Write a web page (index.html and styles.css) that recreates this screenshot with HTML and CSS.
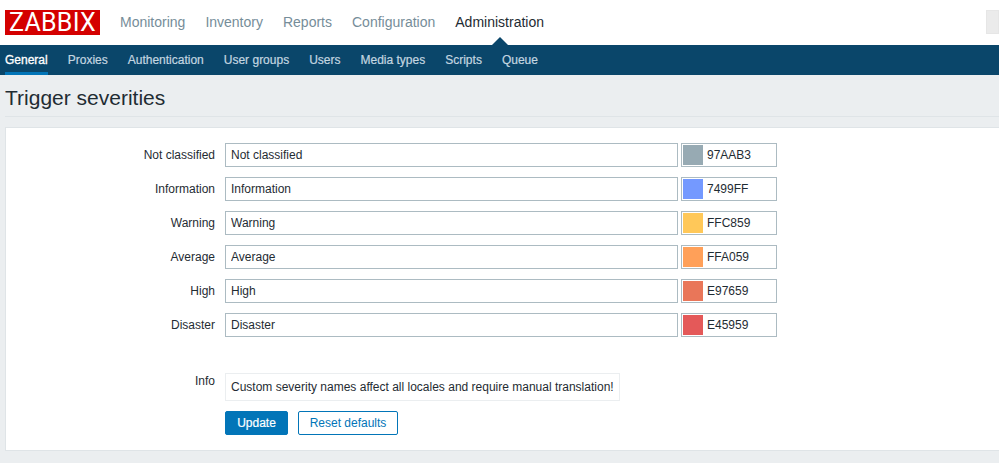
FILE: index.html
```html
<!DOCTYPE html>
<html lang="en">
<head>
    <meta charset="UTF-8">
    <meta name="viewport" content="width=device-width, initial-scale=1.0">
    <title>Trigger severities</title>
    <link rel="stylesheet" href="styles.css">
</head>
<body>
    <header class="topbar">
        <div class="logo">ZABBIX</div>
        <nav class="mainnav">
            <a href="#">Monitoring</a>
            <a href="#">Inventory</a>
            <a href="#">Reports</a>
            <a href="#">Configuration</a>
            <a href="#" class="selected">Administration</a>
        </nav>
        <div class="searchbox"></div>
    </header>

    <nav class="subnav">
        <a href="#" class="selected">General</a>
        <a href="#">Proxies</a>
        <a href="#">Authentication</a>
        <a href="#">User groups</a>
        <a href="#">Users</a>
        <a href="#">Media types</a>
        <a href="#">Scripts</a>
        <a href="#">Queue</a>
    </nav>

    <div class="titlebar">
        <h1>Trigger severities</h1>
    </div>

    <main class="card">
        <form class="severityForm">
            <label>Not classified</label>
            <div class="fields">
                <input type="text" class="nameInput" value="Not classified">
                <div class="colorInput"><span class="swatch swatch-none"></span>97AAB3</div>
            </div>

            <label>Information</label>
            <div class="fields">
                <input type="text" class="nameInput" value="Information">
                <div class="colorInput"><span class="swatch swatch-info"></span>7499FF</div>
            </div>

            <label>Warning</label>
            <div class="fields">
                <input type="text" class="nameInput" value="Warning">
                <div class="colorInput"><span class="swatch swatch-warning"></span>FFC859</div>
            </div>

            <label>Average</label>
            <div class="fields">
                <input type="text" class="nameInput" value="Average">
                <div class="colorInput"><span class="swatch swatch-average"></span>FFA059</div>
            </div>

            <label>High</label>
            <div class="fields">
                <input type="text" class="nameInput" value="High">
                <div class="colorInput"><span class="swatch swatch-high"></span>E97659</div>
            </div>

            <label>Disaster</label>
            <div class="fields">
                <input type="text" class="nameInput" value="Disaster">
                <div class="colorInput"><span class="swatch swatch-disaster"></span>E45959</div>
            </div>

            <label class="infoLabel">Info</label>
            <div class="infoBox">Custom severity names affect all locales and require manual translation!</div>

            <div class="buttons">
                <button type="button" class="btnMain">Update</button>
                <button type="button" class="btnAlt">Reset defaults</button>
            </div>
        </form>
    </main>
</body>
</html>
```

FILE: styles.css
```css
* {
    box-sizing: border-box;
}

html, body {
    overflow: hidden;
}

body {
    margin: 0;
    min-height: 463px;
    font-family: "Liberation Sans", Arial, sans-serif;
    font-size: 12px;
    color: #1f2c33;
    background-color: #ebeef0;
}

a {
    text-decoration: none;
}

.topbar {
    display: flex;
    height: 45px;
    padding: 10px 0 0 5px;
    background-color: #fff;
}

.logo {
    width: 95px;
    height: 25px;
    background-color: #d40000;
    color: #fff;
    font-family: Roboto, "Liberation Sans", sans-serif;
    font-size: 25px;
    line-height: 26px;
    text-align: center;
    letter-spacing: 0.3px;
}

.mainnav {
    display: flex;
    gap: 20px;
    margin-left: 20px;
    font-size: 14px;
    line-height: 24px;
}

.mainnav a {
    color: #768d99;
}

.mainnav a.selected {
    position: relative;
    color: #1f2c33;
}

/* little arrow pointing at the subnav */
.mainnav a.selected::after {
    content: "";
    position: absolute;
    left: 37px;
    top: 27px;
    border-left: 8px solid transparent;
    border-right: 8px solid transparent;
    border-bottom: 8px solid #0a466a;
}

.searchbox {
    width: 13px;
    height: 24px;
    margin-left: auto;
    background-color: #ebebeb;
    border: 1px solid #e6e6e6;
}

.subnav {
    display: flex;
    gap: 20px;
    height: 30px;
    padding-left: 5px;
    background-color: #0a466a;
    line-height: 30px;
}

.subnav a {
    color: #c4d6e0;
    -webkit-text-stroke: 0.2px #c4d6e0;
}

.subnav a.selected {
    height: 30px;
    color: #fff;
    -webkit-text-stroke: 0.3px #fff;
    border-bottom: 3px solid #0275b8;
}

.titlebar {
    height: 42px;
    margin-left: 5px;
    border-bottom: 1px solid #dfe4e7;
}

h1 {
    margin: 0;
    font-size: 21px;
    font-weight: normal;
    line-height: 46px;
    color: #1f2c33;
}

.card {
    height: 324px;
    margin: 10px 0 0 5px;
    padding-top: 15px;
    background-color: #fff;
    border: 1px solid #dfe4e7;
    border-right: 0;
}

.severityForm {
    display: grid;
    grid-template-columns: 209px auto;
    column-gap: 10px;
    row-gap: 10px;
}

.severityForm label {
    line-height: 24px;
    text-align: right;
}

.fields {
    display: flex;
    gap: 3px;
}

.nameInput {
    width: 453px;
    height: 24px;
    padding: 0 5px;
    font-family: inherit;
    font-size: 12px;
    color: #1f2c33;
    background-color: #fff;
    border: 1px solid #acbbc2;
    border-radius: 0;
}

.colorInput {
    display: flex;
    align-items: center;
    width: 96px;
    height: 24px;
    padding-left: 1px;
    border: 1px solid #acbbc2;
}

.swatch {
    width: 20px;
    height: 20px;
    margin-right: 4px;
}

.swatch-none { background-color: #97aab3; }
.swatch-info { background-color: #7499ff; }
.swatch-warning { background-color: #ffc859; }
.swatch-average { background-color: #ffa059; }
.swatch-high { background-color: #e97659; }
.swatch-disaster { background-color: #e45959; }

.severityForm .infoLabel {
    margin-top: 26px;
    line-height: 16px;
}

.infoBox {
    justify-self: start;
    width: 395px;
    height: 28px;
    margin-top: 26px;
    padding: 0 5px;
    line-height: 26px;
    white-space: nowrap;
    background-color: #fff;
    border: 1px solid #ebeef0;
}

.buttons {
    display: flex;
    gap: 10px;
    grid-column: 2;
}

.buttons button {
    height: 24px;
    padding: 0;
    font-family: inherit;
    font-size: 12px;
    border-radius: 2px;
    border: 1px solid #0275b8;
}

.btnMain {
    width: 63px;
    color: #fff;
    -webkit-text-stroke: 0.2px #fff;
    background-color: #0275b8;
}

.btnAlt {
    width: 100px;
    color: #0275b8;
    background-color: #fff;
}
```
